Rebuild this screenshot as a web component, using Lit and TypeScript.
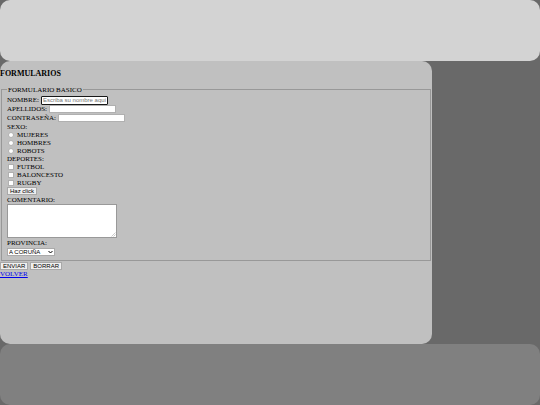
import { LitElement, html, css } from "lit";
import { customElement } from "lit/decorators.js";

const sexes = ["MUJERES", "HOMBRES", "ROBOTS"];
const sports = ["FUTBOL", "BALONCESTO", "RUGBY"];

@customElement("app-root")
export class AppRoot extends LitElement {
  static styles = css`
    :host {
      display: grid;
      grid-template-rows: 15vh 1fr 15vh;
      min-height: 100vh;
      background: #696969;
      color: #000;
      font: 7px/8px "Liberation Serif", "Times New Roman", serif;
    }
    * { box-sizing: border-box; }
    .header, .content, .footer { border-radius: 10px; }
    .header { background: #d3d3d3; }
    .content { width: 80%; background: #c0c0c0; }
    .footer { background: #808080; }
    h1 { margin: 8px 0; padding-top: 1px; font-size: 8px; line-height: 8px; }
    fieldset {
      margin: 0 1px;
      padding: 2px 4px 4px 5px;
      border: 1px solid #989898;
    }
    legend { padding: 0 1px; }
    .row { display: flex; align-items: center; height: 8px; gap: 2px; }
    .tall { height: 9px; }
    .option { gap: 3px; padding-left: 1px; }
    input, button, select, textarea {
      margin: 0;
      border: 1px solid #b0b0b0;
      background: #fff;
      color: #000;
      font: 6px/6px "Liberation Sans", Arial, sans-serif;
      outline: none;
    }
    .text { width: 67px; height: 8px; padding: 0 1px; }
    .active { height: 9px; border-color: #181818; border-radius: 1px; }
    .text::placeholder { color: #757575; opacity: 1; }
    .mark {
      appearance: none;
      flex: none;
      width: 6px;
      height: 6px;
      border-color: #b0b0b0;
    }
    .radio { border-radius: 50%; }
    .mark:checked { background: #0075ff; }
    button {
      height: 8px;
      padding: 0 2px;
      background: #efefef;
      border-color: #a8a8a8;
      white-space: nowrap;
    }
    .comment { position: relative; display: block; width: 110px; margin-bottom: 1px; }
    textarea {
      display: block;
      width: 100%;
      height: 34px;
      padding: 1px;
      border-color: #999;
      resize: none;
    }
    .grip {
      position: absolute;
      right: 1px;
      bottom: 1px;
      width: 5px;
      height: 5px;
      fill: none;
      stroke: #999;
      stroke-width: 0.5;
      pointer-events: none;
    }
    .select { position: relative; display: block; width: 48px; height: 8px; }
    select {
      display: block;
      appearance: none;
      width: 100%;
      height: 8px;
      padding: 0 8px 0 1px;
      border-color: #aaa;
    }
    .arrow {
      position: absolute;
      right: 2px;
      top: 2px;
      width: 5px;
      height: 4px;
      fill: none;
      stroke: #000;
      pointer-events: none;
    }
    .actions { margin-top: 1px; }
    a { display: block; width: fit-content; color: #0000ee; }
  `;

  render() {
    return html`
      <header class="header"></header>
      <main class="content">
        <h1>FORMULARIOS</h1>
        <form @submit=${(e: Event) => e.preventDefault()}>
          <fieldset>
            <legend>FORMULARIO BASICO</legend>
            <div class="row tall">
              <label for="nombre">NOMBRE:</label>
              <input class="text active" id="nombre" type="text" placeholder="Escriba su nombre aquí" />
            </div>
            <div class="row tall">
              <label for="apellidos">APELLIDOS:</label>
              <input class="text" id="apellidos" type="text" />
            </div>
            <div class="row tall">
              <label for="clave">CONTRASEÑA:</label>
              <input class="text" id="clave" type="password" />
            </div>
            <div class="row">SEXO:</div>
            ${sexes.map((s) => html`
              <label class="row option"><input class="mark radio" type="radio" name="sexo" value=${s} />${s}</label>
            `)}
            <div class="row">DEPORTES:</div>
            ${sports.map((s) => html`
              <label class="row option"><input class="mark" type="checkbox" name="deporte" value=${s} />${s}</label>
            `)}
            <div class="row tall"><button type="button">Haz click</button></div>
            <label class="row" for="comentario">COMENTARIO:</label>
            <span class="comment">
              <textarea id="comentario"></textarea>
              <svg class="grip" viewBox="0 0 5 5" aria-hidden="true"><path d="M.5 4.5 4.5 .5M2.5 4.5 4.5 2.5" /></svg>
            </span>
            <label class="row tall" for="provincia">PROVINCIA:</label>
            <span class="select">
              <select id="provincia"><option>A CORUÑA</option></select>
              <svg class="arrow" viewBox="0 0 5 4" aria-hidden="true"><path d="M.5 1 2.5 3 4.5 1" /></svg>
            </span>
          </fieldset>
          <div class="row actions">
            <button type="submit">ENVIAR</button>
            <button type="reset">BORRAR</button>
          </div>
        </form>
        <a href="#">VOLVER</a>
      </main>
      <footer class="footer"></footer>
    `;
  }
}
